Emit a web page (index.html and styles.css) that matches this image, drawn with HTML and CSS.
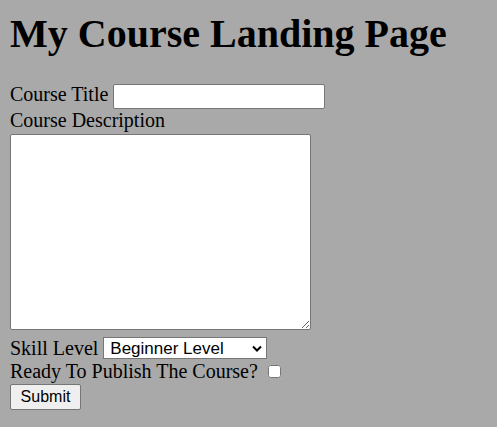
FILE: index.html
```html
<!DOCTYPE html>
<html>
<head>
<meta charset="utf-8">
<link rel="stylesheet" href="styles.css">
</head>
<body class="page">
<h1 class="title">My Course Landing Page</h1>
<form class="course-form">
<label for="title">Course Title</label>
<input id="title" class="title-input" type="text"><br>
<label for="desc">Course Description</label><br>
<textarea id="desc" class="desc"></textarea><br>
<label for="level">Skill Level</label>
<select id="level" class="level">
<option>Beginner Level</option>
<option>Intermediate Level</option>
<option>Advanced Level</option>
</select><br>
<label for="ready">Ready To Publish The Course?</label>
<input id="ready" class="check" type="checkbox"><br>
<input class="submit" type="submit" value="Submit">
</form>
</body>
</html>
```

FILE: styles.css
```css
html { background: darkgray; }
.page {
  margin: 10px;
  background: darkgray;
  font-family: "Liberation Serif", "Times New Roman", serif;
  font-size: 20px;
  color: #000;
}
.title {
  font-size: 40px;
  font-weight: bold;
  margin: 0 0 26px 0;
}
.course-form input, .course-form textarea {
  font-family: "Liberation Sans", Arial, sans-serif;
  font-size: 16px;
  box-sizing: border-box;
  color: #000;
}
.title-input {
  width: 212px;
  height: 25px;
  margin: 0;
  padding: 1px 2px;
  background: #fff;
  border: 1px solid #767676;
  border-radius: 2px;
}
.desc {
  display: inline-block;
  width: 301px;
  height: 196px;
  margin: 2px 0;
  padding: 2px;
  background: #fff;
  border: 1px solid #767676;
  border-radius: 2px;
}
.course-form .level {
  -webkit-appearance: none;
  appearance: none;
  box-sizing: border-box;
  font-family: "Liberation Sans", Arial, sans-serif !important;
  font-size: 17px !important;
  line-height: 19px;
  color: #000;
  width: 164px;
  height: 22px;
  margin: 0;
  padding: 0 20px 0 6px;
  vertical-align: 1px;
  background: #fff url("data:image/svg+xml,%3Csvg xmlns='http://www.w3.org/2000/svg' width='10' height='7'%3E%3Cpath d='M1 1.5l4 4 4-4' fill='none' stroke='black' stroke-width='2'/%3E%3C/svg%3E") no-repeat right 4px center;
  border: 1px solid #767676;
  border-radius: 0;
}
.check {
  width: 13px;
  height: 13px;
  margin: 3px 3px 3px 5px;
}
.submit {
  width: 71px;
  height: 26px;
  margin: 1px 0 0 0;
  padding: 1px 6px;
  background: #efefef;
  border: 1px solid #767676;
  border-radius: 2px;
}
```
